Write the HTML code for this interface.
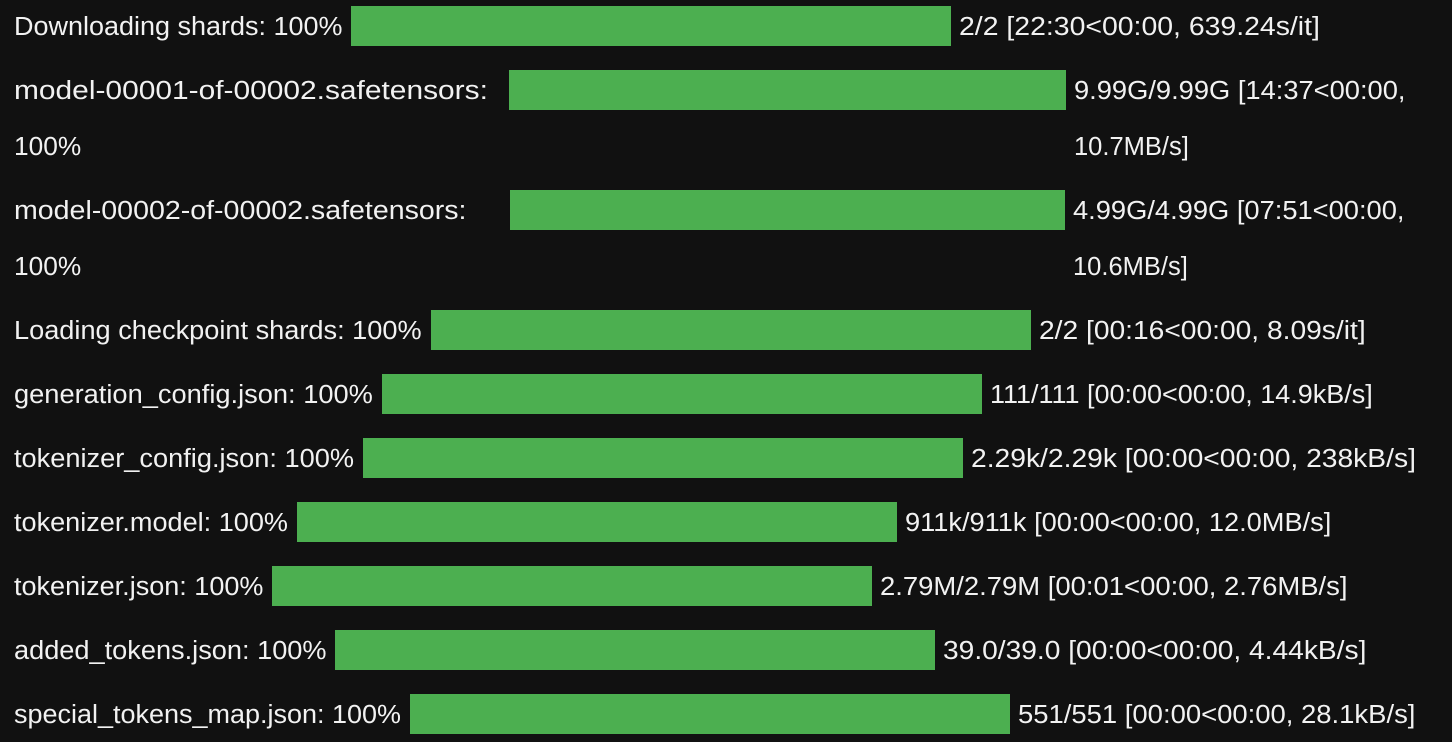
<!DOCTYPE html>
<html><head><meta charset="utf-8"><style>
html,body{margin:0;padding:0;background:#111111;width:1452px;height:742px;overflow:hidden}
body{position:relative;font-family:"Liberation Sans",Arial,sans-serif;font-size:25.5px;color:#f2f2f2}
.t{position:absolute;line-height:40px;white-space:nowrap;transform-origin:0 50%;margin-top:1px}
.b{position:absolute;height:40px;background:#4caf50}
</style></head><body>
<div class="t" style="left:14px;top:6px;transform:scaleX(1.058)">Downloading shards: 100%</div>
<div class="b" style="left:351px;top:6px;width:600px"></div>
<div class="t" style="left:959px;top:6px;transform:scaleX(1.114)">2/2 [22:30&lt;00:00, 639.24s/it]</div>

<div class="t" style="left:14px;top:70px;transform:scaleX(1.173)">model-00001-of-00002.safetensors:</div>
<div class="t" style="left:14px;top:126px;transform:scaleX(1.03)">100%</div>
<div class="b" style="left:509px;top:70px;width:557px"></div>
<div class="t" style="left:1074px;top:70px;transform:scaleX(1.07)">9.99G/9.99G [14:37&lt;00:00,</div>
<div class="t" style="left:1074px;top:126px">10.7MB/s]</div>

<div class="t" style="left:14px;top:190px;transform:scaleX(1.12)">model-00002-of-00002.safetensors:</div>
<div class="t" style="left:14px;top:246px;transform:scaleX(1.03)">100%</div>
<div class="b" style="left:510px;top:190px;width:555px"></div>
<div class="t" style="left:1073px;top:190px;transform:scaleX(1.07)">4.99G/4.99G [07:51&lt;00:00,</div>
<div class="t" style="left:1073px;top:246px">10.6MB/s]</div>

<div class="t" style="left:14px;top:310px;transform:scaleX(1.065)">Loading checkpoint shards: 100%</div>
<div class="b" style="left:431px;top:310px;width:600px"></div>
<div class="t" style="left:1039px;top:310px;transform:scaleX(1.105)">2/2 [00:16&lt;00:00, 8.09s/it]</div>

<div class="t" style="left:14px;top:374px;transform:scaleX(1.068)">generation_config.json: 100%</div>
<div class="b" style="left:382px;top:374px;width:600px"></div>
<div class="t" style="left:990px;top:374px;transform:scaleX(1.058)">111/111 [00:00&lt;00:00, 14.9kB/s]</div>

<div class="t" style="left:14px;top:438px;transform:scaleX(1.066)">tokenizer_config.json: 100%</div>
<div class="b" style="left:363px;top:438px;width:600px"></div>
<div class="t" style="left:971px;top:438px;transform:scaleX(1.107)">2.29k/2.29k [00:00&lt;00:00, 238kB/s]</div>

<div class="t" style="left:14px;top:502px;transform:scaleX(1.062)">tokenizer.model: 100%</div>
<div class="b" style="left:297px;top:502px;width:600px"></div>
<div class="t" style="left:905px;top:502px;transform:scaleX(1.067)">911k/911k [00:00&lt;00:00, 12.0MB/s]</div>

<div class="t" style="left:14px;top:566px;transform:scaleX(1.06)">tokenizer.json: 100%</div>
<div class="b" style="left:272px;top:566px;width:600px"></div>
<div class="t" style="left:880px;top:566px;transform:scaleX(1.076)">2.79M/2.79M [00:01&lt;00:00, 2.76MB/s]</div>

<div class="t" style="left:14px;top:630px;transform:scaleX(1.065)">added_tokens.json: 100%</div>
<div class="b" style="left:335px;top:630px;width:600px"></div>
<div class="t" style="left:943px;top:630px;transform:scaleX(1.104)">39.0/39.0 [00:00&lt;00:00, 4.44kB/s]</div>

<div class="t" style="left:14px;top:694px;transform:scaleX(1.058)">special_tokens_map.json: 100%</div>
<div class="b" style="left:410px;top:694px;width:600px"></div>
<div class="t" style="left:1018px;top:694px;transform:scaleX(1.076)">551/551 [00:00&lt;00:00, 28.1kB/s]</div>
</body></html>
